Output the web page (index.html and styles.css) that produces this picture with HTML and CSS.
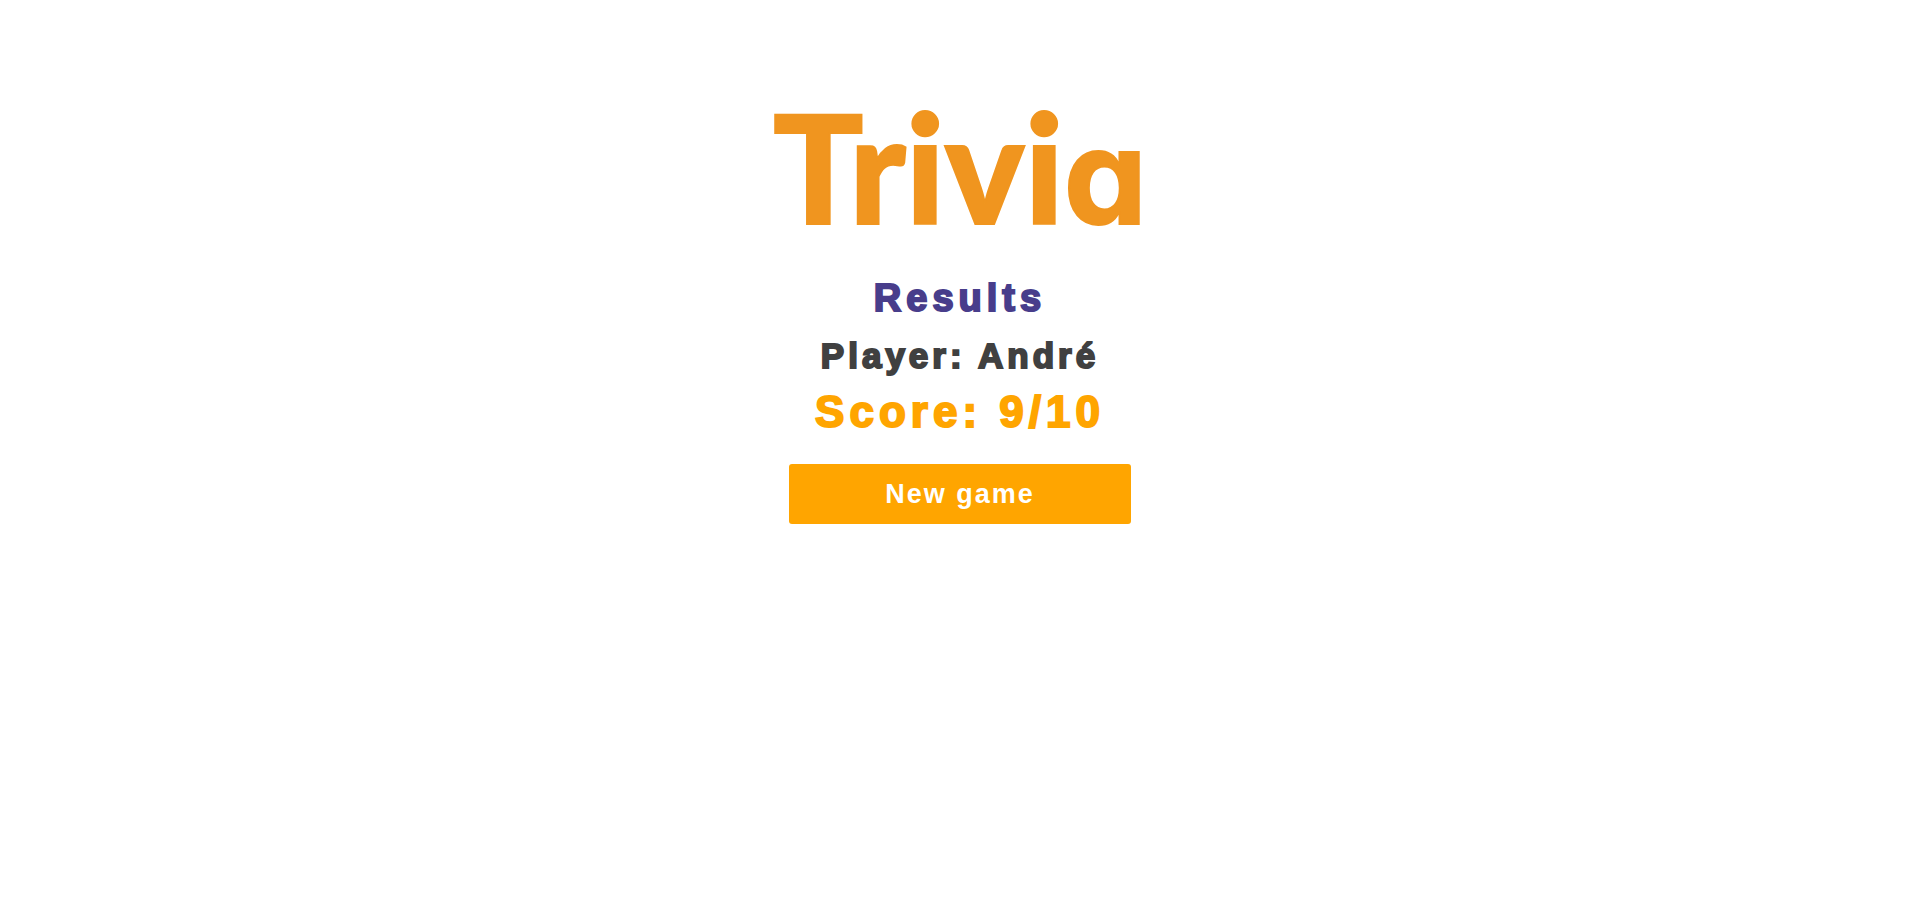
FILE: index.html
```html
<!DOCTYPE html>
<html lang="en">
<head>
<meta charset="utf-8">
<title>Trivia</title>
<link rel="stylesheet" href="styles.css">
</head>
<body>
<main class="page">
  <h1 class="logo">Trivi<span class="logo-round">a</span></h1>
  <section class="results">
    <h2 class="title">Results</h2>
    <p class="player">Player: André</p>
    <p class="score">Score: 9/10</p>
  </section>
  <button class="new-game" type="button">New game</button>
</main>
</body>
</html>
```
FILE: styles.css
```css
* {
  box-sizing: border-box;
  margin: 0;
}

body {
  background: #fff;
  font-family: "Arial Black", "Liberation Sans", Arial, sans-serif;
}

.page {
  display: flex;
  flex-direction: column;
  align-items: center;
  padding: 90px 16px 32px;
}

.logo {
  color: #f0951f;
  font-family: Lato, sans-serif;
  font-size: 150px;
  font-weight: 900;
  line-height: 152px;
  -webkit-text-stroke: 2px;
}

.logo-round {
  font-family: Inter, sans-serif;
  font-feature-settings: "cv11";
  font-size: 132px;
  font-weight: 700;
  line-height: 1;
}

.results {
  margin-top: 26px;
  font-weight: 900;
  letter-spacing: 5px;
  text-align: center;
}

.title {
  color: #483d8b;
  font-size: 38px;
  line-height: 60px;
  -webkit-text-stroke: 2px;
}

.player {
  color: #404040;
  font-size: 35px;
  letter-spacing: 4px;
  line-height: 56px;
  -webkit-text-stroke: 2px;
}

.score {
  color: #ffa500;
  font-size: 44px;
  line-height: 56px;
  -webkit-text-stroke: 2px;
}

.new-game {
  width: 342px;
  max-width: 100%;
  height: 60px;
  margin-top: 24px;
  border: 0;
  border-radius: 3px;
  background: #ffa500;
  color: #fff;
  font-family: "Liberation Sans", Arial, sans-serif;
  font-size: 27px;
  font-weight: 700;
  letter-spacing: 2px;
  cursor: pointer;
}
```
